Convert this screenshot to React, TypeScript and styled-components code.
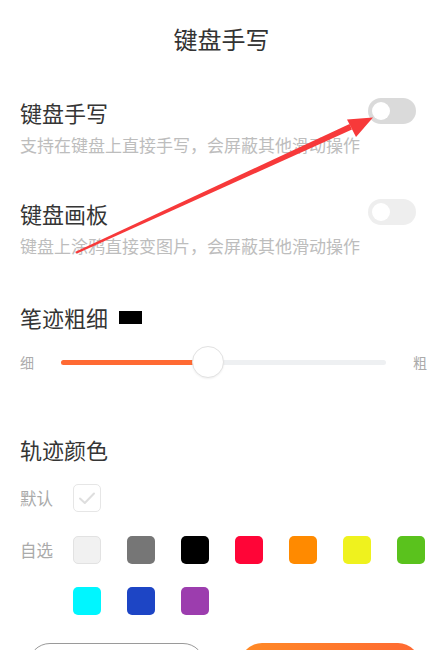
import React from 'react';
import styled, { createGlobalStyle } from 'styled-components';

const GlobalStyle = createGlobalStyle`
  html, body {
    margin: 0;
    padding: 0;
    background: #ffffff;
  }
  body {
    font-family: "Noto Sans CJK SC", "Noto Sans", sans-serif;
  }
`;

const swatches = [
  '#f1f1f1',
  '#767676',
  '#000000',
  '#ff0537',
  '#ff8a00',
  '#eff21e',
  '#5ac21d',
  '#00f6ff',
  '#1d45c5',
  '#9c3dae',
];

const toggles = [
  { label: '键盘手写', hint: '支持在键盘上直接手写，会屏蔽其他滑动操作', faint: false },
  { label: '键盘画板', hint: '键盘上涂鸦直接变图片，会屏蔽其他滑动操作', faint: true },
];

export default function App() {
  const thickness = 45;

  return (
    <>
      <GlobalStyle />
      <Page>
        <Header>键盘手写</Header>

        {toggles.map((t, i) => (
          <SettingRow key={t.label} $first={i === 0}>
            <SettingText>
              <Label>{t.label}</Label>
              <Hint>{t.hint}</Hint>
            </SettingText>
            <Toggle $faint={t.faint}>
              <Knob />
            </Toggle>
          </SettingRow>
        ))}

        <StrokeTitle>
          <Label>笔迹粗细</Label>
          <StrokePreview />
        </StrokeTitle>

        <SliderRow>
          <SliderLabel>细</SliderLabel>
          <Track>
            <Fill style={{ width: `${thickness}%` }} />
            <Thumb style={{ left: `${thickness}%` }} />
          </Track>
          <SliderLabel>粗</SliderLabel>
        </SliderRow>

        <ColorTitle>
          <Label>轨迹颜色</Label>
        </ColorTitle>

        <ColorRow $gap={20}>
          <RowLabel>默认</RowLabel>
          <SwatchGrid>
            <CheckBox>
              <svg width="18" height="14" viewBox="0 0 18 14">
                <path
                  d="M2 7.5 L6.8 12 L16 2.5"
                  fill="none"
                  stroke="#dedede"
                  strokeWidth="2"
                  strokeLinecap="round"
                  strokeLinejoin="round"
                />
              </svg>
            </CheckBox>
          </SwatchGrid>
        </ColorRow>

        <ColorRow $gap={24}>
          <RowLabel>自选</RowLabel>
          <SwatchGrid>
            {swatches.map((c) => (
              <Swatch key={c} $color={c} $light={c === '#f1f1f1'} />
            ))}
          </SwatchGrid>
        </ColorRow>

        <Buttons>
          <OutlineButton />
          <PrimaryButton />
        </Buttons>

        <Arrow viewBox="0 0 443 650" width="443" height="650">
          <polygon points="75,252 77,253.5 352,129.5 349.5,124" fill="#f7393a" />
          <polygon points="373,117.5 347,119.5 356,137" fill="#f7393a" />
        </Arrow>
      </Page>
    </>
  );
}

const Page = styled.div`
  position: relative;
  width: 443px;
  height: 650px;
  overflow: hidden;
  padding: 0 20px;
  box-sizing: border-box;
  background: #ffffff;
`;

const Header = styled.div`
  height: 76px;
  display: flex;
  align-items: center;
  justify-content: center;
  font-size: 24px;
  color: #333333;
`;

const SettingRow = styled.div<{ $first?: boolean }>`
  display: flex;
  align-items: flex-start;
  justify-content: space-between;
  margin-top: ${(p) => (p.$first ? '21px' : '41px')};
`;

const SettingText = styled.div`
  display: flex;
  flex-direction: column;
  gap: 6px;
`;

const Label = styled.div`
  font-size: 22px;
  line-height: 30px;
  color: #353535;
`;

const Hint = styled.div`
  font-size: 17px;
  line-height: 24px;
  color: #bdbdbd;
`;

const Toggle = styled.div<{ $faint?: boolean }>`
  width: 48px;
  height: 26px;
  border-radius: 13px;
  margin-top: 1px;
  margin-right: 7px;
  background: ${(p) => (p.$faint ? '#eeeeee' : '#dadada')};
  display: flex;
  align-items: center;
  padding-left: 4px;
  box-sizing: border-box;
`;

const Knob = styled.div`
  width: 18px;
  height: 18px;
  border-radius: 50%;
  background: #ffffff;
`;

const StrokeTitle = styled.div`
  display: flex;
  align-items: center;
  gap: 11px;
  margin-top: 44px;
`;

const StrokePreview = styled.div`
  width: 23px;
  height: 13px;
  background: #000000;
`;

const SliderRow = styled.div`
  display: flex;
  align-items: center;
  height: 32px;
  margin-top: 14px;
  margin-right: -4px;
`;

const SliderLabel = styled.div`
  font-size: 14px;
  line-height: 20px;
  color: #ababab;
`;

const Track = styled.div`
  position: relative;
  flex: 1;
  height: 5px;
  margin: 0 27px;
  border-radius: 3px;
  background: #eef0f2;
`;

const Fill = styled.div`
  height: 100%;
  border-radius: 3px;
  background: #ff6a33;
`;

const Thumb = styled.div`
  position: absolute;
  top: 50%;
  width: 30px;
  height: 30px;
  margin-left: -15px;
  margin-top: -16px;
  border-radius: 50%;
  background: #ffffff;
  border: 1px solid #e2e2e2;
  box-shadow: 0 1px 2px rgba(0, 0, 0, 0.06);
`;

const ColorTitle = styled.div`
  margin-top: 56px;
`;

const ColorRow = styled.div<{ $gap: number }>`
  display: flex;
  align-items: flex-start;
  margin-top: ${(p) => p.$gap}px;
`;

const RowLabel = styled.div`
  width: 53px;
  flex-shrink: 0;
  font-size: 16.5px;
  line-height: 28px;
  color: #aaaaaa;
  white-space: nowrap;
`;

const SwatchGrid = styled.div`
  display: grid;
  grid-template-columns: repeat(7, 28px);
  column-gap: 26px;
  row-gap: 23px;
`;

const CheckBox = styled.div`
  width: 28px;
  height: 28px;
  box-sizing: border-box;
  border: 1px solid #e6e6e6;
  border-radius: 5px;
  display: flex;
  align-items: center;
  justify-content: center;
`;

const Swatch = styled.div<{ $color: string; $light?: boolean }>`
  width: 28px;
  height: 28px;
  box-sizing: border-box;
  border-radius: 5px;
  background: ${(p) => p.$color};
  border: ${(p) => (p.$light ? '1px solid #e2e2e2' : 'none')};
`;

const Buttons = styled.div`
  display: flex;
  justify-content: space-between;
  margin-top: 28px;
  padding: 0 3px 0 8px;
`;

const OutlineButton = styled.div`
  width: 177px;
  height: 44px;
  box-sizing: border-box;
  border: 1px solid #9a9a9a;
  border-radius: 22px;
`;

const PrimaryButton = styled.div`
  width: 180px;
  height: 44px;
  border-radius: 22px;
  background: linear-gradient(90deg, #ff8a25, #ff6933);
`;

const Arrow = styled.svg`
  position: absolute;
  left: 0;
  top: 0;
  pointer-events: none;
`;
